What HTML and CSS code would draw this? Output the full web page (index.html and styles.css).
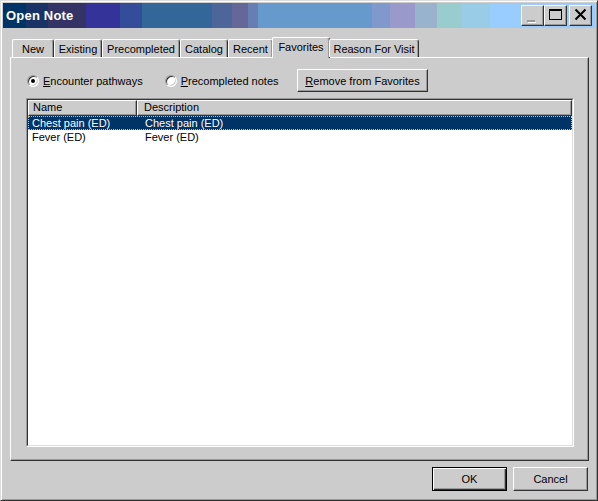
FILE: index.html
```html
<!DOCTYPE html>
<html>
<head>
<meta charset="utf-8">
<title>Open Note</title>
<link rel="stylesheet" href="styles.css">
</head>
<body>
<div class="window">
  <div class="titlebar">
    <span class="title">Open Note</span>
    <div class="ctrls">
      <div class="tb">
        <svg width="23" height="21" viewBox="0 0 23 21"><rect x="6" y="15" width="8" height="2" fill="#999"/><rect x="7" y="17" width="8" height="1" fill="#fff"/></svg>
      </div>
      <div class="tb tb-max">
        <svg width="23" height="21" viewBox="0 0 23 21"><rect x="5.5" y="4.5" width="12" height="10" fill="none" stroke="#000"/><rect x="5" y="5" width="13" height="1" fill="#000"/></svg>
      </div>
      <div class="tb">
        <svg width="23" height="21" viewBox="0 0 23 21"><path d="M6.5 4.5 L16.5 14.5 M16.5 4.5 L6.5 14.5" stroke="#000" stroke-width="2" fill="none"/></svg>
      </div>
    </div>
  </div>
  <div class="body">
    <div class="tabs">
      <div class="tab t-new">New</div>
      <div class="tab t-existing">Existing</div>
      <div class="tab t-pre">Precompleted</div>
      <div class="tab t-cat">Catalog</div>
      <div class="tab t-recent">Recent</div>
      <div class="tab active">Favorites</div>
      <div class="tab t-reason">Reason For Visit</div>
    </div>
    <div class="panel">
      <div class="options">
        <label class="radio r1"><span class="circle checked"></span><span><u>E</u>ncounter pathways</span></label>
        <label class="radio r2"><span class="circle"></span><span><u>P</u>recompleted notes</span></label>
        <div class="btn remove"><span><u>R</u>emove from Favorites</span></div>
      </div>
      <div class="list">
        <div class="list-inner">
          <div class="thead">
            <div class="th c1">Name</div>
            <div class="th c2">Description</div>
          </div>
          <div class="row sel"><span class="c1">Chest pain (ED)</span><span class="c2">Chest pain (ED)</span></div>
          <div class="row"><span class="c1">Fever (ED)</span><span class="c2">Fever (ED)</span></div>
        </div>
      </div>
    </div>
    <div class="footer">
      <div class="btn default"><span>OK</span></div>
      <div class="btn"><span>Cancel</span></div>
    </div>
  </div>
</div>
</body>
</html>
```
FILE: styles.css
```css
html, body {
  margin: 0;
  padding: 0;
  background: #cccccc;
}
body {
  font-family: "Liberation Sans", Arial, sans-serif;
  font-size: 11px;
  color: #000;
}
.window {
  width: 598px;
  height: 501px;
  box-sizing: border-box;
  border: 1px solid;
  border-color: #dedede #333333 #333333 #dedede;
  box-shadow: inset 1px 1px #ffffff, inset -1px -1px #999999;
  padding: 2px;
  display: flex;
  flex-direction: column;
  background: #cccccc;
}
.titlebar {
  height: 25px;
  flex-shrink: 0;
  display: flex;
  align-items: center;
  padding: 0 3px 0 3px;
  background: linear-gradient(to right,
    #003366 0 23px,
    #1a3366 23px 45px,
    #333366 45px 83px,
    #333399 83px 117px,
    #334d99 117px 139px,
    #336699 139px 209px,
    #4d6699 209px 229px,
    #666699 229px 245px,
    #667fb3 245px 255px,
    #6699cc 255px 369px,
    #8099cc 369px 387px,
    #9999cc 387px 412px,
    #99b3cc 412px 434px,
    #99cccc 434px 459px,
    #99cce6 459px 487px,
    #99ccff 487px 100%);
}
.title {
  flex: 1;
  color: #ffffff;
  font-weight: bold;
  font-size: 13px;
  letter-spacing: 0.2px;
}
.ctrls {
  display: flex;
  align-items: center;
}
.tb {
  width: 23px;
  height: 21px;
  box-sizing: border-box;
  background: #cccccc;
  border: 1px solid;
  border-color: #ffffff #333333 #333333 #ffffff;
  box-shadow: inset -1px -1px #999999;
  position: relative;
}
.tb svg {
  display: block;
  margin: -1px 0 0 -1px;
}
.tb-max {
  margin-right: 2px;
}
.body {
  flex: 1;
  display: flex;
  flex-direction: column;
  padding: 9px 6px 0 7px;
  min-height: 0;
}
.tabs {
  display: flex;
  align-items: flex-end;
  height: 21px;
  margin-bottom: -1px;
  padding-left: 2px;
  position: relative;
  z-index: 1;
}
.tab {
  height: 18px;
  box-sizing: border-box;
  margin-bottom: 1px;
  border-top: 1px solid #ffffff;
  border-left: 1px solid #ffffff;
  border-right: 1px solid #333333;
  box-shadow: inset -1px 0 #999999;
  border-radius: 2px 3px 0 0;
  padding: 2px 0 0 0;
  line-height: 14px;
  text-align: center;
  white-space: nowrap;
}
.t-new { width: 42px; }
.t-existing { width: 48px; }
.t-pre { width: 78px; }
.t-cat { width: 48px; }
.t-recent { width: 45px; }
.t-reason { width: 90px; }
.tab.active {
  width: 58px;
  height: 21px;
  margin: 0 -1px 0 -1px;
  padding-top: 2px;
  background: #cccccc;
}
.panel {
  flex: 1;
  min-height: 0;
  display: flex;
  flex-direction: column;
  border: 1px solid;
  border-color: #ffffff #333333 #333333 #ffffff;
  box-shadow: inset -1px -1px #999999;
  padding: 11px 14px 13px 15px;
}
.options {
  height: 23px;
  display: flex;
  align-items: center;
  flex-shrink: 0;
}
.radio {
  display: flex;
  align-items: center;
  gap: 4px;
}
.r1 { margin-left: 1px; }
.r2 { margin-left: 22px; }
.circle {
  width: 12px;
  height: 12px;
  box-sizing: border-box;
  border-radius: 50%;
  border: 1px solid;
  border-color: #999999 #ffffff #ffffff #999999;
  box-shadow: inset 1px 1px #333333, inset -1px -1px #cccccc;
  background: #ffffff;
  display: flex;
  align-items: center;
  justify-content: center;
}
.circle.checked::after {
  content: "";
  width: 4px;
  height: 4px;
  border-radius: 50%;
  background: #000000;
}
.btn {
  box-sizing: border-box;
  height: 24px;
  width: 75px;
  background: #cccccc;
  border: 1px solid;
  border-color: #ffffff #333333 #333333 #ffffff;
  box-shadow: inset -1px -1px #999999;
  display: flex;
  align-items: center;
  justify-content: center;
}
.remove {
  width: 131px;
  height: 23px;
  margin-left: auto;
  margin-right: 146px;
}
.btn.default {
  border: 1px solid #000000;
  box-shadow: inset 1px 1px #ffffff, inset -1px -1px #333333, inset -2px -2px #999999;
}
.list {
  flex: 1;
  min-height: 0;
  margin-top: 6px;
  border: 1px solid;
  border-color: #999999 #ffffff #ffffff #999999;
  display: flex;
}
.list-inner {
  flex: 1;
  border: 1px solid;
  border-color: #333333 #dedede #dedede #333333;
  background: #ffffff;
}
.thead {
  display: flex;
  height: 16px;
}
.th {
  box-sizing: border-box;
  height: 16px;
  background: #cccccc;
  border: 1px solid;
  border-color: #ffffff #333333 #333333 #ffffff;
  box-shadow: inset -1px -1px #999999;
  line-height: 13px;
  white-space: nowrap;
}
.thead .c1 {
  width: 109px;
  padding-left: 4px;
}
.thead .c2 {
  flex: 1;
  padding-left: 6px;
}
.row {
  display: flex;
  height: 14px;
  box-sizing: border-box;
  border: 1px dotted transparent;
  line-height: 12px;
  white-space: nowrap;
}
.row .c1 {
  width: 108px;
  padding-left: 3px;
  box-sizing: border-box;
}
.row .c2 {
  flex: 1;
  padding-left: 8px;
}
.row.sel {
  background: #003366;
  color: #ffffff;
  border-color: #e0b870;
}
.footer {
  display: flex;
  justify-content: flex-end;
  gap: 6px;
  padding: 6px 1px 7px 0;
  flex-shrink: 0;
}
```
